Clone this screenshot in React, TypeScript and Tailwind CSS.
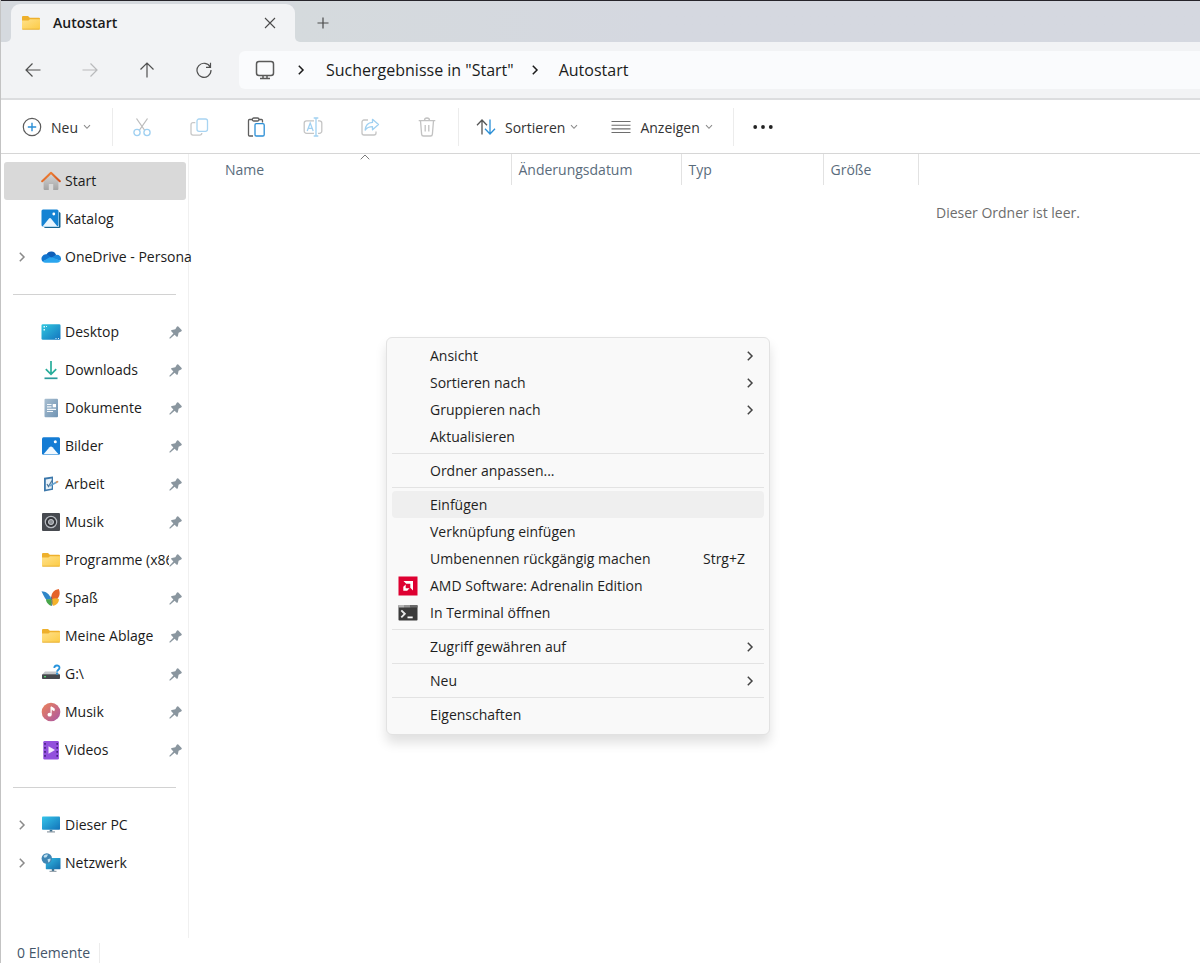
import type { ReactNode } from "react";

type IconProps = { className?: string };

function Chevron({ className = "" }: IconProps) {
  return (
    <svg className={className} width="8" height="12" viewBox="0 0 8 12" fill="none" stroke="currentColor" strokeWidth="1.5" aria-hidden="true">
      <path d="M1.8 1.8 6 6 1.8 10.2" />
    </svg>
  );
}

function ChevronDown() {
  return (
    <svg width="8" height="6" viewBox="0 0 8 6" fill="none" stroke="#8b8b8b" strokeWidth="1.1" aria-hidden="true">
      <path d="M1 1.2 4 4.3 7 1.2" />
    </svg>
  );
}

function FolderIcon() {
  return (
    <svg width="20" height="20" viewBox="0 0 20 20" aria-hidden="true">
      <defs>
        <linearGradient id="folderFront" x1="0" y1="0" x2="1" y2="1">
          <stop offset="0" stopColor="#ffe18a" />
          <stop offset="1" stopColor="#fccb45" />
        </linearGradient>
      </defs>
      <path d="M1 4a1 1 0 0 1 1-1h5l1.8 1.8H18a1 1 0 0 1 1 1V9H1z" fill="#eeb02c" />
      <path d="M1 7.6h6.4l1.6-1.4h10V15.600a1 1 0 0 1-1 1H2a1 1 0 0 1-1-1z" fill="url(#folderFront)" />
      <path d="M1.300 16.200h17.400" stroke="#e5a92c" strokeWidth="0.8" />
    </svg>
  );
}

function HomeIcon() {
  return (
    <svg width="20" height="20" viewBox="0 0 20 20" aria-hidden="true">
      <defs>
        <linearGradient id="homeWall" x1="0" y1="0" x2="0" y2="1">
          <stop offset="0" stopColor="#d8d8d8" />
          <stop offset="1" stopColor="#a3a3a3" />
        </linearGradient>
        <linearGradient id="homeRoof" x1="0" y1="0" x2="1" y2="1">
          <stop offset="0" stopColor="#f58a3a" />
          <stop offset="1" stopColor="#d2521c" />
        </linearGradient>
      </defs>
      <path d="M2.600 9 10 2l7.400 7v9a1 1 0 0 1-1 1h-4.200v-6H7.800v6H3.600a1 1 0 0 1-1-1z" fill="url(#homeWall)" />
      <path d="M1.200 10.200 10 1.800l8.800 8.400" fill="none" stroke="url(#homeRoof)" strokeWidth="2.100" strokeLinecap="round" strokeLinejoin="round" />
    </svg>
  );
}

function GalleryIcon() {
  return (
    <svg width="20" height="20" viewBox="0 0 20 20" aria-hidden="true">
      <rect x="3" y="3" width="16.500" height="16" rx="1.500" fill="#17648f" />
      <rect x="2" y="2" width="16" height="16" rx="1" fill="#e8f4fb" />
      <rect x="0.500" y="0.500" width="17" height="17" rx="1.500" fill="#1583d3" />
      <path d="M1.500 17.500 7.800 9.800a1.600 1.600 0 0 1 2.400 0l6.300 7.700z" fill="#e9f5fd" />
      <circle cx="12.800" cy="5" r="1.400" fill="#fff" />
    </svg>
  );
}

function OneDriveIcon() {
  return (
    <svg width="20" height="20" viewBox="0 0 20 20" aria-hidden="true">
      <path d="M5.500 7.500a5.200 5.200 0 0 1 9.700.700L10 12 4 9z" fill="#0f5fb8" />
      <path d="M4.800 7.200a4.600 4.600 0 0 0-3.400 7.300L10.500 11 7.500 8.200a4.500 4.500 0 0 0-2.700-1z" fill="#1175cf" />
      <path d="M14.600 8a4.100 4.100 0 0 1 5 5.700L10 11z" fill="#1a88dc" />
      <path d="M1.500 14.500 8.700 10.200l2.800.3 8 3.300A4 4 0 0 1 16 15.800H4.600a4.200 4.200 0 0 1-3.100-1.300z" fill="#2aa5ee" />
    </svg>
  );
}

function DesktopIcon() {
  return (
    <svg width="20" height="20" viewBox="0 0 20 20" aria-hidden="true">
      <defs>
        <linearGradient id="desktopFill" x1="0" y1="0" x2="1" y2="1">
          <stop offset="0" stopColor="#31c8e0" />
          <stop offset="1" stopColor="#1374bf" />
        </linearGradient>
      </defs>
      <rect x="0.500" y="2.300" width="19" height="15.400" rx="1.300" fill="url(#desktopFill)" />
      <g fill="#dff7fc">
        <rect x="2.500" y="4" width="1.500" height="1.500" />
        <rect x="2.500" y="7" width="1.500" height="1.500" />
        <rect x="5" y="4" width="1" height="1" />
        <rect x="14.500" y="16" width="1" height="1" />
        <rect x="17" y="16" width="1" height="1" />
      </g>
    </svg>
  );
}

function DownloadIcon() {
  return (
    <svg width="20" height="20" viewBox="0 0 20 20" fill="none" aria-hidden="true">
      <path d="M10 1v13M4.800 9.200 10 14.300l5.200-5.100" stroke="#27ad9b" strokeWidth="1.700" />
      <path d="M3.500 18.300h13" stroke="#2a9a9b" strokeWidth="1.700" />
    </svg>
  );
}

function DocumentIcon() {
  return (
    <svg width="20" height="20" viewBox="0 0 20 20" aria-hidden="true">
      <defs>
        <linearGradient id="docFill" x1="0" y1="0" x2="1" y2="1">
          <stop offset="0" stopColor="#a9bfd1" />
          <stop offset="1" stopColor="#6f93b3" />
        </linearGradient>
      </defs>
      <rect x="3.500" y="0.800" width="13.500" height="18.400" rx="1" fill="url(#docFill)" />
      <path d="M6 6.500h4.500M6 8.800h4.500M6 11.300h9M6 13.500h6" stroke="#f4f8fb" strokeWidth="1.200" />
      <rect x="11.700" y="6" width="3.300" height="3.300" fill="#fff" />
    </svg>
  );
}

function PicturesIcon() {
  return (
    <svg width="20" height="20" viewBox="0 0 20 20" aria-hidden="true">
      <rect x="1" y="1.300" width="18" height="17.400" rx="1.500" fill="#147cd4" />
      <path d="m2.500 18.200 6-6.900a2 2 0 0 1 3 0l6 6.900z" fill="#f1f9ff" />
      <circle cx="14.300" cy="5.700" r="1.500" fill="#fff" />
    </svg>
  );
}

function WorkIcon() {
  return (
    <svg width="20" height="20" viewBox="0 0 20 20" aria-hidden="true">
      <path d="m3 3.700 9-1.300v13.300L3 17.500z" fill="#3c78ab" />
      <path d="m4.800 5.400 5.900-.9v9.900l-5.900 1.100z" fill="#eaf2f8" />
      <path d="m6 10 1.500 2.500L11 6.500" fill="none" stroke="#51799b" strokeWidth="1.300" />
      <path d="m8.500 12 7.500-4" stroke="#6ba4cf" strokeWidth="1.700" />
      <path d="m15 8.500 2.200-1.100" stroke="#d79058" strokeWidth="1.600" />
    </svg>
  );
}

function SpeakerIcon() {
  return (
    <svg width="20" height="20" viewBox="0 0 20 20" aria-hidden="true">
      <rect x="1" y="1" width="18" height="18" rx="1" fill="#474a50" />
      <circle cx="10" cy="10" r="5.700" fill="#34363b" stroke="#b8bcc2" strokeWidth="1.200" />
      <circle cx="10" cy="10" r="2.600" fill="#8f9399" stroke="#d3d6da" strokeWidth="0.800" />
    </svg>
  );
}

function ButterflyIcon() {
  return (
    <svg width="20" height="20" viewBox="0 0 20 20" aria-hidden="true">
      <path d="M.5 3.300c4 0 8.300 2.700 9.700 7.700L5.500 12C3.300 9.500 2 6.500.5 3.300z" fill="#2f86c8" />
      <path d="M10.300 11 5 11.400c.2 3.400 2.900 5.500 5.100 6.300.7-1.800.7-4.300.2-6.700z" fill="#49a64a" />
      <path d="M10.500 11.500c-1.200-5.700 2.600-9.700 7.300-10.400 1.600 3.600 1 8-2.200 10.400z" fill="#e5642b" />
      <path d="M10.500 11.300c2.700-1.600 5.400-1.300 7.400-.3.200 3.500-2.400 6.200-5.800 6.700-1.400-1.900-1.800-3.900-1.600-6.400z" fill="#f4b22c" />
      <path d="M10 8.500c.9 2.500 1.200 5.700.6 9.300" stroke="#365e7c" fill="none" strokeWidth="0.900" />
    </svg>
  );
}

function DriveIcon() {
  return (
    <svg width="20" height="20" viewBox="0 0 20 20" aria-hidden="true">
      <path d="M4 7.500h12l2.800 3H1.200z" fill="#c3c5c8" />
      <rect x="1" y="10.300" width="18" height="4.800" rx="0.800" fill="#45484d" />
      <rect x="3" y="12" width="2" height="1.300" fill="#53d36b" />
      <path d="M13.300 4c0-3.200 5.200-3.400 5.200-.2 0 2-2.400 2-2.400 4" fill="none" stroke="#2894dc" strokeWidth="1.800" />
      <circle cx="16.100" cy="9.700" r="1.100" fill="#2894dc" />
    </svg>
  );
}

function MusicIcon() {
  return (
    <svg width="20" height="20" viewBox="0 0 20 20" aria-hidden="true">
      <defs>
        <linearGradient id="musicFill" x1="0" y1="0" x2="1" y2="1">
          <stop offset="0" stopColor="#ee8458" />
          <stop offset="1" stopColor="#a956a5" />
        </linearGradient>
      </defs>
      <circle cx="10" cy="10" r="9.300" fill="url(#musicFill)" />
      <ellipse cx="8.600" cy="12.700" rx="2.100" ry="1.900" fill="#fff" />
      <path d="M10 12.700V4.800l3.200 1.800v2L10.700 7.400" fill="#fff" stroke="#fff" strokeWidth="1" />
    </svg>
  );
}

function VideoIcon() {
  return (
    <svg width="20" height="20" viewBox="0 0 20 20" aria-hidden="true">
      <rect x="2.300" y="1" width="15.600" height="18.500" rx="1.300" fill="#9250dd" />
      <path d="M4 3v15M16.200 3v15" stroke="#3f1c78" strokeWidth="1.500" strokeDasharray="1.800 2.200" />
      <path d="m7.500 6.200 6.500 3.800-6.500 3.800z" fill="#f3eafc" />
    </svg>
  );
}

function PcIcon() {
  return (
    <svg width="20" height="20" viewBox="0 0 20 20" aria-hidden="true">
      <defs>
        <linearGradient id="pcFill" x1="0" y1="0" x2="1" y2="1">
          <stop offset="0" stopColor="#35c4ea" />
          <stop offset="1" stopColor="#1272b8" />
        </linearGradient>
      </defs>
      <rect x="1" y="1.600" width="18" height="13.200" rx="0.800" fill="url(#pcFill)" />
      <rect x="8.700" y="14.800" width="2.600" height="2" fill="#3c708e" />
      <rect x="6" y="16.300" width="8" height="1.200" fill="#8d9aa4" />
    </svg>
  );
}

function NetworkIcon() {
  return (
    <svg width="20" height="20" viewBox="0 0 20 20" aria-hidden="true">
      <defs>
        <linearGradient id="netFill" x1="0" y1="0" x2="1" y2="1">
          <stop offset="0" stopColor="#33bde6" />
          <stop offset="1" stopColor="#136aa9" />
        </linearGradient>
      </defs>
      <rect x="4.800" y="5" width="14.700" height="11.200" rx="0.600" fill="url(#netFill)" />
      <rect x="10.800" y="16" width="2.400" height="2" fill="#3d7191" />
      <rect x="8.500" y="17.800" width="7" height="1.100" fill="#8e9ba5" />
      <circle cx="5.800" cy="5.500" r="5.200" fill="#3f86b4" />
      <path d="M2.500 3.200c1.500-1.500 3-1.800 4.500-1.500L5.500 4.200l-2 .5zM6.500 6.200l3-.8c.2 2-.7 3.500-2.200 4.200z" fill="#bfe0ef" />
    </svg>
  );
}

function PinIcon() {
  return (
    <svg className="mr-1 shrink-0" width="13" height="13" viewBox="0 0 13 13" aria-hidden="true">
      <path d="M7.800.7a1 1 0 0 1 1.500-.1l3.100 3.200a1 1 0 0 1-.3 1.600L9.600 6.700 8.900 10a.9.900 0 0 1-1.500.5L5.600 8.700 1 12.800l-.8-.8L4.400 7.500 2.500 5.600a.9.900 0 0 1 .4-1.500l3.400-.8z" fill="#8a969f" />
    </svg>
  );
}

type NavItem = { label: string; icon: ReactNode; expandable?: boolean; pinned?: boolean; selected?: boolean };

const topItems: NavItem[] = [
  { label: "Start", icon: <HomeIcon />, selected: true },
  { label: "Katalog", icon: <GalleryIcon /> },
  { label: "OneDrive - Persona", icon: <OneDriveIcon />, expandable: true },
];

const pinnedItems: NavItem[] = [
  { label: "Desktop", icon: <DesktopIcon />, pinned: true },
  { label: "Downloads", icon: <DownloadIcon />, pinned: true },
  { label: "Dokumente", icon: <DocumentIcon />, pinned: true },
  { label: "Bilder", icon: <PicturesIcon />, pinned: true },
  { label: "Arbeit", icon: <WorkIcon />, pinned: true },
  { label: "Musik", icon: <SpeakerIcon />, pinned: true },
  { label: "Programme (x86", icon: <FolderIcon />, pinned: true },
  { label: "Spaß", icon: <ButterflyIcon />, pinned: true },
  { label: "Meine Ablage", icon: <FolderIcon />, pinned: true },
  { label: "G:\\", icon: <DriveIcon />, pinned: true },
  { label: "Musik", icon: <MusicIcon />, pinned: true },
  { label: "Videos", icon: <VideoIcon />, pinned: true },
];

const deviceItems: NavItem[] = [
  { label: "Dieser PC", icon: <PcIcon />, expandable: true },
  { label: "Netzwerk", icon: <NetworkIcon />, expandable: true },
];

function NavList({ items }: { items: NavItem[] }) {
  return (
    <ul>
      {items.map((item, index) => (
        <li key={index}>
          <a
            href="#"
            className={
              item.selected
                ? "flex h-[38px] items-center rounded-[3px] bg-[#d9d9d9] pl-2"
                : "flex h-[38px] items-center rounded-[3px] pl-2 hover:bg-[#ececec]"
            }
          >
            <span className="mr-[9px] flex w-5 shrink-0 justify-center text-[#8a8a8a]">
              {item.expandable && <Chevron />}
            </span>
            <span className="mr-1 shrink-0">{item.icon}</span>
            <span
              className={
                item.pinned
                  ? "min-w-0 flex-1 overflow-hidden whitespace-nowrap"
                  : "min-w-0 flex-1 whitespace-nowrap"
              }
            >
              {item.label}
            </span>
            {item.pinned && <PinIcon />}
          </a>
        </li>
      ))}
    </ul>
  );
}

function NavDivider() {
  return (
    <div className="mr-[10px] ml-[9px] flex h-[37px] items-center">
      <hr className="w-full border-[#d2d2d2]" />
    </div>
  );
}

function AmdIcon() {
  return (
    <svg width="20" height="20" viewBox="0 0 20 20" aria-hidden="true">
      <rect x="0.500" y="0.500" width="19" height="19" fill="#de0031" />
      <path d="M5.500 5h9.500v9.500l-2.700-2.700V7.700H8.200z" fill="#fff" />
      <path d="M7.700 8.500v3.800h3.800L9.200 14.700H5.300v-3.900z" fill="#fff" />
    </svg>
  );
}

function TerminalIcon() {
  return (
    <svg width="20" height="20" viewBox="0 0 20 20" aria-hidden="true">
      <rect x="0.500" y="2" width="19" height="15.500" rx="0.800" fill="#3b3b3b" />
      <path d="M.5 4.500V2.800a.8.800 0 0 1 .8-.8H6v2.500z" fill="#b5b5b5" />
      <path d="M6 2h6.500v2.500H6z" fill="#949494" />
      <path d="M12.500 2h6.200a.8.800 0 0 1 .8.800v1.700h-7z" fill="#6b6b6b" />
      <path d="m3.300 7.300 3.500 3.500-3.500 3.500" fill="none" stroke="#e8e8e8" strokeWidth="1.900" />
      <path d="M9.500 14.400h5.200" stroke="#fff" strokeWidth="1.800" />
    </svg>
  );
}

type MenuEntry = { label: string; submenu?: boolean; shortcut?: string; icon?: ReactNode; active?: boolean };

const menuGroups: MenuEntry[][] = [
  [
    { label: "Ansicht", submenu: true },
    { label: "Sortieren nach", submenu: true },
    { label: "Gruppieren nach", submenu: true },
    { label: "Aktualisieren" },
  ],
  [{ label: "Ordner anpassen..." }],
  [
    { label: "Einfügen", active: true },
    { label: "Verknüpfung einfügen" },
    { label: "Umbenennen rückgängig machen", shortcut: "Strg+Z" },
    { label: "AMD Software: Adrenalin Edition", icon: <AmdIcon /> },
    { label: "In Terminal öffnen", icon: <TerminalIcon /> },
  ],
  [{ label: "Zugriff gewähren auf", submenu: true }],
  [{ label: "Neu", submenu: true }],
  [{ label: "Eigenschaften" }],
];

function ContextMenu() {
  return (
    <div
      role="menu"
      className="absolute top-[183px] left-[197px] w-96 rounded-md border border-[#e2e2e2] bg-[#f9f9f9] px-[5px] pt-1 pb-[6px] text-[#1f1f1f] shadow-[0_8px_12px_rgba(0,0,0,0.12)]"
    >
      {menuGroups.map((group, groupIndex) => (
        <div key={groupIndex} role="group">
          {groupIndex > 0 && <hr className="my-[3px] border-[#e3e3e3]" />}
          {group.map((entry) => (
            <button
              key={entry.label}
              type="button"
              role="menuitem"
              className={
                entry.active
                  ? "flex h-[27px] w-full items-center rounded bg-[#efefef] text-left"
                  : "flex h-[27px] w-full items-center rounded text-left hover:bg-[#efefef]"
              }
            >
              <span className="flex w-[38px] shrink-0 justify-start pl-[6px]">{entry.icon}</span>
              <span className="flex-1">{entry.label}</span>
              {entry.shortcut && <span className="mr-[19px]">{entry.shortcut}</span>}
              {entry.submenu && <Chevron className="mr-[10px] text-[#444]" />}
            </button>
          ))}
        </div>
      ))}
    </div>
  );
}

function ToolDivider() {
  return <div className="h-[38px] w-px bg-[#ececec]" />;
}

function ToolButton({ label, disabled = false, children }: { label: string; disabled?: boolean; children: ReactNode }) {
  return (
    <button type="button" aria-label={label} disabled={disabled} className="flex h-9 w-[57px] items-center justify-center">
      <svg width="20" height="20" viewBox="0 0 20 20" fill="none" strokeWidth="1.300" aria-hidden="true">
        {children}
      </svg>
    </button>
  );
}

function NavButton({ label, disabled = false, children }: { label: string; disabled?: boolean; children: ReactNode }) {
  return (
    <button
      type="button"
      aria-label={label}
      disabled={disabled}
      className="flex h-9 w-[57px] items-center justify-center text-[#505050] disabled:text-[#b9babc]"
    >
      <svg width="16" height="16" viewBox="0 0 16 16" fill="none" stroke="currentColor" strokeWidth="1.200" aria-hidden="true">
        {children}
      </svg>
    </button>
  );
}

function CommandBar() {
  return (
    <div role="toolbar" className="flex h-[54px] items-center border-b border-[#d6d6d6] bg-white text-[#333]">
      <button type="button" className="flex h-9 w-[111px] items-center pl-[21px]">
        <svg width="20" height="20" viewBox="0 0 20 20" fill="none" aria-hidden="true">
          <circle cx="10" cy="10" r="8.700" stroke="#5b5b5b" strokeWidth="1.200" />
          <path d="M10 5.800v8.400M5.800 10h8.400" stroke="#2b8fd6" strokeWidth="1.400" />
        </svg>
        <span className="mr-[5px] ml-[9px] pt-0.5">Neu</span>
        <ChevronDown />
      </button>
      <ToolDivider />
      <div className="flex pr-[3px]">
        <ToolButton label="Ausschneiden" disabled>
          <path d="m4.500 1.500 8.300 12M15.500 1.500l-8.300 12" stroke="#bdbdbd" />
          <circle cx="5" cy="15.500" r="3.100" stroke="#9fd0f1" />
          <circle cx="15" cy="15.500" r="3.100" stroke="#9fd0f1" />
        </ToolButton>
        <ToolButton label="Kopieren" disabled>
          <rect x="8" y="2" width="10.500" height="12.300" rx="2" stroke="#a8d4f2" />
          <path d="M6.300 5.700H4a2 2 0 0 0-2 2v8.400a2 2 0 0 0 2 2h6.800a2 2 0 0 0 2-2" stroke="#c8c8c8" />
        </ToolButton>
        <ToolButton label="Einfügen">
          <path d="M6.300 2.500H3.500a1 1 0 0 0-1 1V18a1 1 0 0 0 1 1H7M12.700 2.500h2.800a1 1 0 0 1 1 1v2" stroke="#5f5f5f" />
          <rect x="6.300" y="1" width="6.700" height="3" rx="1.500" stroke="#5f5f5f" />
          <rect x="9" y="6.700" width="9.200" height="12.300" rx="1.300" stroke="#2b8fd6" />
        </ToolButton>
        <ToolButton label="Umbenennen" disabled>
          <path d="M11 3.800H3.500A2.300 2.300 0 0 0 1.200 6v8a2.300 2.300 0 0 0 2.300 2.300H11M15 3.800h1.500A2.300 2.300 0 0 1 18.800 6v8a2.300 2.300 0 0 1-2.300 2.300H15" stroke="#c5c5c5" />
          <path d="M13 1v18M10.700 1h4.600M10.700 19h4.600" stroke="#a1d1f1" />
          <path d="m4.200 14 3-8 3 8M5.200 11.400h4" stroke="#a1d1f1" />
        </ToolButton>
        <ToolButton label="Freigeben" disabled>
          <path d="M8 3H4a2 2 0 0 0-2 2v11a2 2 0 0 0 2 2h10a2 2 0 0 0 2-2v-1.500" stroke="#c5c5c5" />
          <path d="M12.500 2.300 18.500 7.500l-6 5.200V9.700c-3.500 0-5.600 1-7.300 3.400.3-4.600 3-7.400 7.300-7.700z" stroke="#9fd0f1" strokeLinejoin="round" />
        </ToolButton>
        <ToolButton label="Löschen" disabled>
          <path d="M1.700 3.700h16.600M7.500 3.500a2.500 2.500 0 0 1 5 0M3.500 3.700l1.100 13.400A2 2 0 0 0 6.600 19h6.800a2 2 0 0 0 2-1.900l1.100-13.400M8.200 8v6.500M11.800 8v6.500" stroke="#c2c2c2" />
        </ToolButton>
      </div>
      <ToolDivider />
      <button type="button" className="flex h-9 items-center pl-[17px]">
        <svg width="20" height="16" viewBox="0 0 20 16" fill="none" strokeWidth="1.300" aria-hidden="true">
          <path d="M6 15.500V1M1 6.200 6 1l5 5.200" stroke="#555" />
          <path d="M14 .5V15M9 9.800l5 5.200 5-5.200" stroke="#2b8fd6" />
        </svg>
        <span className="mr-[5px] ml-[9px] pt-0.5">Sortieren</span>
        <ChevronDown />
      </button>
      <button type="button" className="flex h-9 items-center pl-[33px]">
        <svg width="20" height="14" viewBox="0 0 20 14" fill="none" stroke="#6e6e6e" strokeWidth="1.100" aria-hidden="true">
          <path d="M.5 1.500h19M.5 5.200h19M.5 8.900h19M.5 12.500h19" />
        </svg>
        <span className="mr-[5px] ml-[9px] pt-0.5">Anzeigen</span>
        <ChevronDown />
      </button>
      <div className="ml-5">
        <ToolDivider />
      </div>
      <button type="button" aria-label="Weitere Optionen" className="ml-[19px] flex h-9 items-center">
        <svg width="20" height="6" viewBox="0 0 20 6" fill="#222" aria-hidden="true">
          <circle cx="2.200" cy="3" r="1.900" />
          <circle cx="10" cy="3" r="1.900" />
          <circle cx="17.800" cy="3" r="1.900" />
        </svg>
      </button>
    </div>
  );
}

export default function App() {
  return (
    <div className="flex min-h-screen flex-col border-l border-[#c3c3c3] bg-white font-['Open_Sans','Noto_Sans',sans-serif] text-sm text-[#1b1b1b]">
      <header className="border-t border-[#26242a] bg-[#f2f3f5]">
        <div className="flex h-[41px]">
          <div className="w-[10px] rounded-br-[5px] bg-[#d5d9de]" />
          <div className="flex w-[284px] bg-[#d5d9de] pt-[3px]">
            <div className="flex flex-1 items-center rounded-t-[9px] bg-[#f2f3f5] pr-[18px] pl-[10px]">
              <FolderIcon />
              <span className="ml-[12px] flex-1 font-semibold">Autostart</span>
              <button type="button" aria-label="Tab schließen" className="flex h-6 w-[14px] items-center justify-center">
                <svg width="12" height="12" viewBox="0 0 12 12" fill="none" stroke="#4a4a4a" strokeWidth="1.100" aria-hidden="true">
                  <path d="m1 1 10 10M11 1 1 11" />
                </svg>
              </button>
            </div>
          </div>
          <div className="flex flex-1 items-center rounded-bl-[5px] bg-gradient-to-r from-[#d5dadd] to-[#d5d8e0] to-40% pt-[3px] pl-[21px]">
            <button type="button" aria-label="Neuer Tab" className="flex h-6 w-[14px] items-center justify-center">
              <svg width="12" height="12" viewBox="0 0 12 12" fill="none" stroke="#4a4a4a" strokeWidth="1.200" aria-hidden="true">
                <path d="M6 .5v11M.5 6h11" />
              </svg>
            </button>
          </div>
        </div>
        <nav aria-label="Adressleiste" className="flex h-[58px] items-center border-b-2 border-[#dcdddf] pl-[3px]">
          <NavButton label="Zurück">
            <path d="M15.500 8H1.200M7.500 1.500 1 8l6.500 6.500" />
          </NavButton>
          <NavButton label="Vorwärts" disabled>
            <path d="M.5 8h14.300M8.500 1.500 15 8l-6.500 6.500" />
          </NavButton>
          <NavButton label="Nach oben">
            <path d="M8 15.500V1.200M1.500 7.500 8 1l6.500 6.500" />
          </NavButton>
          <NavButton label="Aktualisieren">
            <path d="M14.300 5.200A7 7 0 1 0 15 8M14.500.800v4.500H10" />
          </NavButton>
          <div className="ml-[7px] flex h-[38px] flex-1 items-center rounded-l-md bg-[#fafbfd] pl-4 text-base">
            <svg width="20" height="20" viewBox="0 0 20 20" fill="none" stroke="#5a5a5a" strokeWidth="1.500" aria-hidden="true">
              <rect x="1.500" y="1.500" width="17" height="14" rx="2.500" />
              <path d="M8 15.500v3M12 15.500v3M5 18.500h10" />
            </svg>
            <Chevron className="ml-[22px]" />
            <a href="#" className="ml-[21px]">Suchergebnisse in "Start"</a>
            <Chevron className="ml-[17px]" />
            <a href="#" className="ml-[20px]">Autostart</a>
          </div>
        </nav>
      </header>

      <CommandBar />

      <div className="flex flex-1">
        <aside className="w-[188px] border-r border-[#f0f0f0] pt-2 pr-[2px] pl-[3px]">
          <NavList items={topItems} />
          <NavDivider />
          <NavList items={pinnedItems} />
          <NavDivider />
          <NavList items={deviceItems} />
        </aside>

        <main className="relative flex-1">
          <table className="w-full table-fixed text-left">
            <colgroup>
              <col className="w-[322px]" />
              <col className="w-[170px]" />
              <col className="w-[142px]" />
              <col className="w-[95px]" />
              <col />
            </colgroup>
            <thead className="text-[#5a6c7c]">
              <tr className="h-[31px]">
                <th className="relative border-r border-[#e2e2e2] pl-9 font-normal">
                  Name
                  <svg className="absolute top-0 left-[171px]" width="10" height="6" viewBox="0 0 10 6" fill="none" stroke="#7c7c7c" aria-hidden="true">
                    <path d="M.7 5.300 5 1l4.300 4.300" />
                  </svg>
                </th>
                <th className="border-r border-[#e2e2e2] pl-[7px] font-normal">Änderungsdatum</th>
                <th className="border-r border-[#e2e2e2] pl-[7px] font-normal">Typ</th>
                <th className="border-r border-[#e2e2e2] pl-[7px] font-normal">Größe</th>
                <td />
              </tr>
            </thead>
            <tbody className="text-[#6d6d6d]">
              <tr>
                <td colSpan={4} />
                <td className="pt-[18px] pl-[18px]">Dieser Ordner ist leer.</td>
              </tr>
            </tbody>
          </table>
          <ContextMenu />
        </main>
      </div>

      <footer className="flex h-[25px] items-center pt-[5px] pl-4 text-[#44566a]">
        <span className="border-r border-[#ececec] pr-[9px] leading-5">0 Elemente</span>
      </footer>
    </div>
  );
}
